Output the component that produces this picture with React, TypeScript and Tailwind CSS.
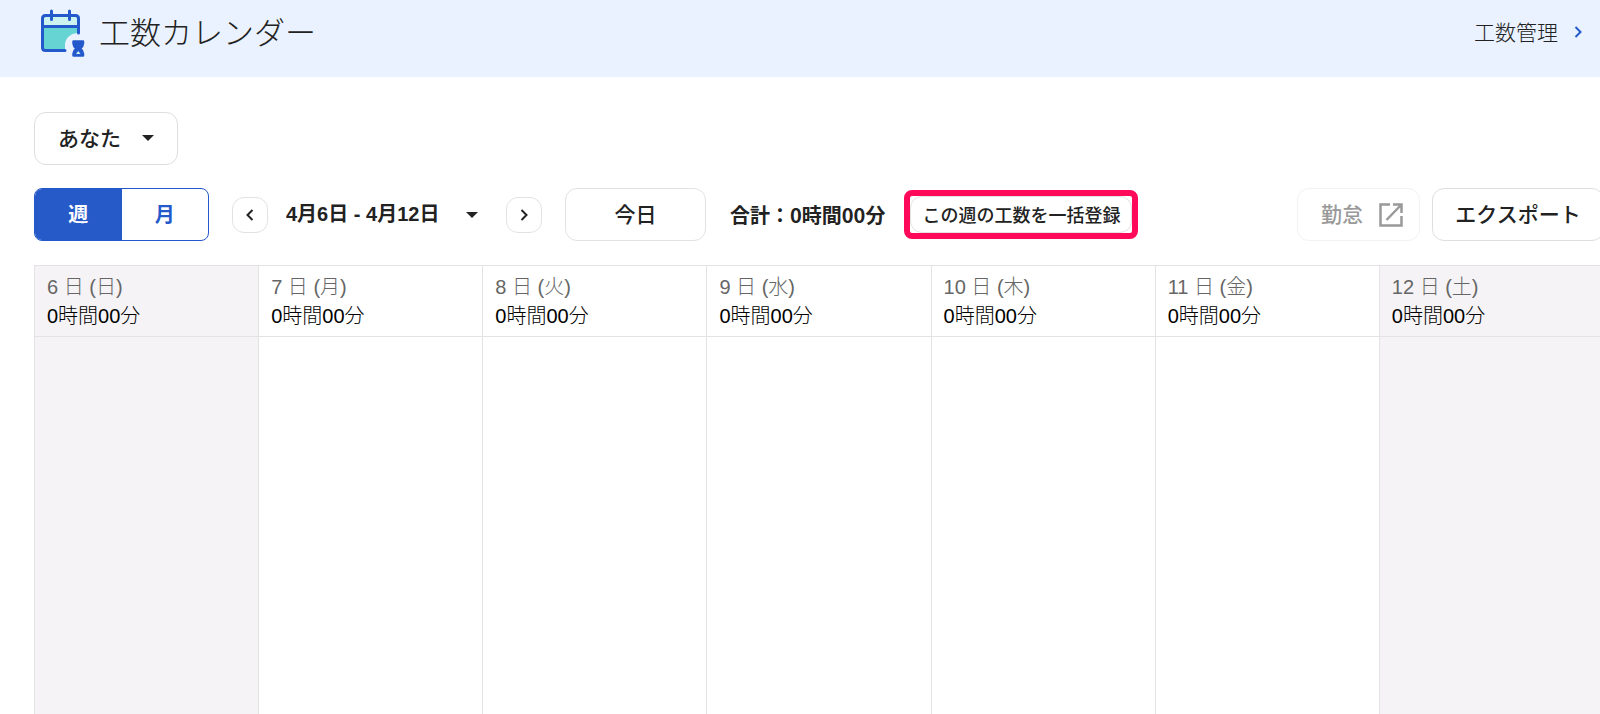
const days = [
  { label: "6 日 (日)", weekend: true },
  { label: "7 日 (月)", weekend: false },
  { label: "8 日 (火)", weekend: false },
  { label: "9 日 (水)", weekend: false },
  { label: "10 日 (木)", weekend: false },
  { label: "11 日 (金)", weekend: false },
  { label: "12 日 (土)", weekend: true },
];

function CalendarIcon() {
  return (
    <svg width="46" height="50" viewBox="0 0 46 50" fill="none" aria-hidden="true">
      <rect x="3" y="8" width="35" height="11" fill="#cdf3f1" />
      <path d="M3 19H38.500V25C30 25 25 31 25 37V43H3Z" fill="#66d4d2" />
      <path
        d="M25 42.500H5.500Q2.500 42.500 2.500 39.500V10.500Q2.500 7.500 5.500 7.500H35.500Q38.500 7.500 38.500 10.500V25M3 18.500H38M11.500 3V11.500M29.500 3V11.500"
        stroke="#2459cc"
        strokeWidth="3"
        strokeLinecap="round"
      />
      <path
        d="M33.500 33.500H43V35.500Q43 38 40 40.500Q43 43 43 45.500V47.500H33.500V45.500Q33.500 43 36.500 40.500Q33.500 38 33.500 35.500Z"
        fill="#2459cc"
        stroke="#2459cc"
        strokeWidth="2.500"
        strokeLinejoin="round"
      />
      <path d="M38.250 43L40.500 46H36Z" fill="#cdf3f1" />
    </svg>
  );
}

function Chevron({ flip = false }: { flip?: boolean }) {
  return (
    <svg width="8" height="12" viewBox="0 0 8 12" fill="none" aria-hidden="true" className={flip ? "rotate-180" : ""}>
      <path d="M1.500 1L6.500 6L1.500 11" stroke="currentColor" strokeWidth="2" />
    </svg>
  );
}

function Caret() {
  return (
    <svg width="12" height="6" viewBox="0 0 12 6" aria-hidden="true" className="pointer-events-none absolute right-0 top-1/2 -translate-y-1/2">
      <path d="M0 0H12L6 6Z" fill="#222" />
    </svg>
  );
}

export default function App() {
  return (
    <div className="min-h-screen overflow-hidden bg-white font-['Liberation_Sans','Noto_Sans_CJK_JP',sans-serif] text-xl text-[#222]">
      <header className="flex h-[77px] items-start justify-between bg-[#eaf2ff] pl-10 pr-4 pt-2">
        <div className="flex items-start gap-[13px]">
          <CalendarIcon />
          <h1 className="font-['Noto_Sans_CJK_JP',sans-serif] text-[31px] font-light leading-[46px]">工数カレンダー</h1>
        </div>
        <a href="#management" className="flex items-center gap-4 pr-0.5 font-['Noto_Sans_CJK_JP',sans-serif] text-[21px] font-light leading-[46px]">
          工数管理
          <span className="pt-0.5 text-[#2459cc]"><Chevron /></span>
        </a>
      </header>

      <main className="-mr-1 pl-[34px] pt-[35px]">
        <label className="relative flex h-[53px] w-36 items-center rounded-xl border border-[#dedede] px-[23px]">
          <span className="relative block w-full">
            <select aria-label="ユーザー" className="block w-full appearance-none bg-transparent pb-0.5 font-['Noto_Sans_CJK_JP',sans-serif] text-[21px] font-medium outline-none">
              <option>あなた</option>
            </select>
            <Caret />
          </span>
        </label>

        <div className="mt-[23px] flex h-[53px] items-center font-['Noto_Sans_CJK_JP',sans-serif] font-medium">
          <div className="flex h-[53px] w-[175px] overflow-hidden rounded-lg border border-[#2459cc]">
            <button type="button" aria-pressed="true" className="flex-1 bg-[#265ac8] pb-0.5 font-bold text-white">週</button>
            <button type="button" aria-pressed="false" className="flex-1 pb-0.5 font-bold text-[#2459cc]">月</button>
          </div>
          <button type="button" aria-label="前の週" className="ml-[23px] flex size-9 items-center justify-center rounded-xl border border-[#e2e2e2]">
            <Chevron flip />
          </button>
          <label className="relative ml-[18px] block w-48">
            <select aria-label="期間" className="block w-full appearance-none bg-transparent pb-0.5 font-['Liberation_Sans','Noto_Sans_CJK_JP',sans-serif] font-bold outline-none">
              <option>4月6日 - 4月12日</option>
            </select>
            <Caret />
          </label>
          <button type="button" aria-label="次の週" className="ml-7 flex size-9 items-center justify-center rounded-xl border border-[#e2e2e2]">
            <Chevron />
          </button>
          <button type="button" className="ml-[23px] h-[53px] w-[141px] rounded-xl border border-[#e2e2e2] pb-0.5 text-[21px]">今日</button>
          <p className="ml-6 font-bold">合計：0時間00分</p>
          <div className="ml-[19px] rounded-lg border-6 border-[#ff0a5b]">
            <button type="button" className="block h-[37px] rounded-xl border border-[#e2e2e2] px-[11px] pb-0.5 text-lg">この週の工数を一括登録</button>
          </div>
          <div className="ml-auto flex gap-3">
            <button type="button" disabled className="flex h-[53px] w-[123px] items-center justify-center gap-[15px] rounded-xl border border-[#f2f2f2] pl-2 text-[21px] text-[#999]">
              <span className="pb-0.5">勤怠</span>
              <svg width="26" height="26" viewBox="0 0 26 26" fill="none" aria-hidden="true">
                <path d="M12 2.500H2.500V23.500H23.500V14M15 2.500H23.500V11M23.500 2.500L8.500 18" stroke="currentColor" strokeWidth="2.500" />
              </svg>
            </button>
            <button type="button" className="h-[53px] w-[172px] rounded-xl border border-[#dedede] pb-0.5 text-[21px]">エクスポート</button>
          </div>
        </div>

        <table className="mt-6 w-full table-fixed border-collapse">
          <thead>
            <tr className="h-[71px]">
              {days.map((day) => (
                <th
                  key={day.label}
                  scope="col"
                  className={`border border-[#e3e3e3] px-3 pt-0.5 text-left font-light leading-[29px] ${day.weekend ? "bg-[#f5f3f5]" : "bg-white"}`}
                >
                  <div className="text-[#666]">{day.label}</div>
                  <div className="text-black">0時間00分</div>
                </th>
              ))}
            </tr>
          </thead>
          <tbody>
            <tr className="h-[calc(100vh-336px)]">
              {days.map((day) => (
                <td key={day.label} className={`border border-b-0 border-[#e3e3e3] ${day.weekend ? "bg-[#f5f3f5]" : "bg-white"}`} />
              ))}
            </tr>
          </tbody>
        </table>
      </main>
    </div>
  );
}
